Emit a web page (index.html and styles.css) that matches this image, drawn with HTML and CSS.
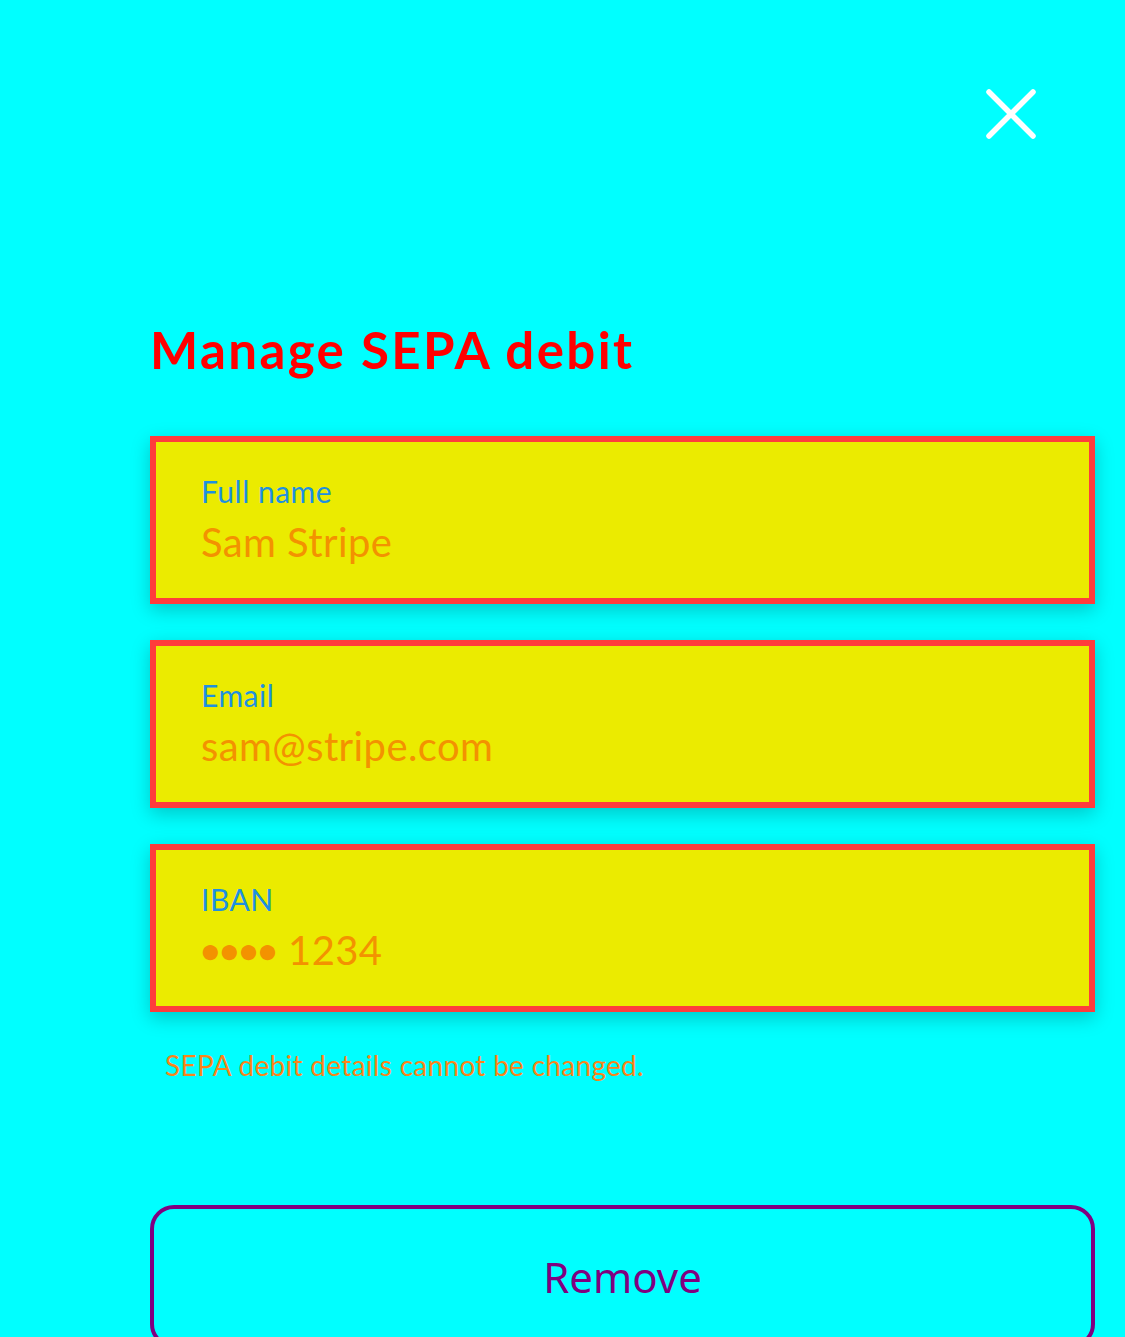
FILE: index.html
```html
<!DOCTYPE html>
<html lang="en">
<head>
<meta charset="utf-8">
<title>Manage SEPA debit</title>
<link rel="stylesheet" href="styles.css">
</head>
<body>
<div class="page">
  <header class="top">
    <button class="close" aria-label="Close">
      <svg viewBox="0 0 56 56" width="56" height="56">
        <path d="M6 6 L50 50 M50 6 L6 50" stroke="#ffffff" stroke-width="5.5" stroke-linecap="round" fill="none"/>
      </svg>
    </button>
  </header>
  <main class="content">
    <h1 class="title">Manage SEPA debit</h1>
    <div class="fields">
      <div class="field">
        <div class="label">Full name</div>
        <div class="value">Sam Stripe</div>
      </div>
      <div class="field">
        <div class="label">Email</div>
        <div class="value">sam@stripe.com</div>
      </div>
      <div class="field">
        <div class="label">IBAN</div>
        <div class="value"><span class="dots">●●●●</span> 1234</div>
      </div>
    </div>
    <p class="note">SEPA debit details cannot be changed.</p>
    <button class="remove">Remove</button>
  </main>
</div>
</body>
</html>
```
FILE: styles.css
```css
html, body {
  margin: 0;
  padding: 0;
  background: #00ffff;
}
body {
  font-family: Lato, "Noto Sans", sans-serif;
  overflow: hidden;
  height: 1337px;
}
.page {
  padding-top: 86px;
}
.top {
  display: flex;
  justify-content: flex-end;
  padding-right: 86px;
  height: 56px;
}
.close {
  width: 56px;
  height: 56px;
  padding: 0;
  border: 0;
  background: transparent;
  display: block;
}
.close svg {
  display: block;
}
.content {
  padding: 0 30px 0 150px;
}
.title {
  margin: 178px 0 0 0;
  font-size: 51px;
  line-height: 60px;
  font-weight: 700;
  letter-spacing: 2.4px;
  color: #ff0000;
}
.fields {
  margin-top: 56px;
  display: flex;
  flex-direction: column;
  gap: 36px;
}
.field {
  box-sizing: border-box;
  height: 168px;
  border: 6px solid #ff3c3c;
  background: #ebeb00;
  padding: 31px 0 0 45px;
  box-shadow: 0 6px 18px rgba(0, 0, 0, 0.22);
}
.label {
  font-size: 30px;
  line-height: 36px;
  letter-spacing: 0.5px;
  color: #1e90e0;
}
.value {
  margin-top: 9px;
  font-size: 40px;
  line-height: 48px;
  letter-spacing: 0.4px;
  color: #f39200;
}
.dots {
  font-size: 31px;
  letter-spacing: 0.5px;
  vertical-align: 3px;
}
.note {
  margin: 35px 0 0 15px;
  font-size: 28px;
  line-height: 36px;
  letter-spacing: 0.3px;
  color: #fa8419;
}
.remove {
  display: block;
  box-sizing: border-box;
  width: 100%;
  margin-top: 122px;
  padding: 39px 0;
  border: 4px solid #800080;
  border-radius: 24px;
  background: transparent;
  font-family: "Noto Sans", sans-serif;
  font-size: 42px;
  line-height: 57px;
  color: #800080;
  text-align: center;
}
```
